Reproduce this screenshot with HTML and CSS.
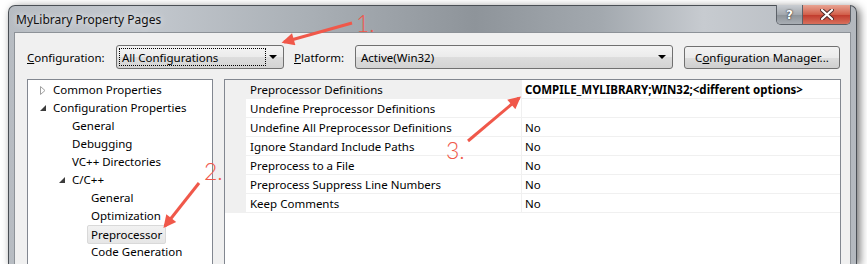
FILE: index.html
```html
<!DOCTYPE html>
<html lang="en">
<head>
    <meta charset="UTF-8">
    <title>MyLibrary Property Pages</title>
    <link rel="stylesheet" href="styles.css">
</head>
<body>
    <div class="window">
        <div class="titlebar">
            <span class="title">MyLibrary Property Pages</span>
            <div class="caption-buttons">
                <span class="cap-help">?</span>
                <span class="cap-close">
                    <svg width="14" height="11" viewBox="0 0 14 11"><path d="M2 1 L12 10 M12 1 L2 10" stroke="#4a2a2a" stroke-width="4" stroke-linecap="round"/><path d="M2 1 L12 10 M12 1 L2 10" stroke="#fff" stroke-width="2.2" stroke-linecap="round"/></svg>
                </span>
            </div>
        </div>
        <div class="client">
            <div class="toolbar">
                <label class="field-label config-label"><u>C</u>onfiguration:</label>
                <div class="combo config-combo">
                    <span class="focus-rect">All Configurations</span>
                    <span class="combo-arrow"></span>
                </div>
                <label class="field-label platform-label"><u>P</u>latform:</label>
                <div class="combo platform-combo">
                    <span class="combo-text">Active(Win32)</span>
                    <span class="combo-arrow"></span>
                </div>
                <button class="manager-button">C<u>o</u>nfiguration Manager...</button>
            </div>
            <div class="panes">
                <ul class="tree">
                    <li class="level0"><span class="expander"><svg width="6" height="9" viewBox="0 0 6 9"><path d="M0.5 0.5 L5 4.5 L0.5 8.5 Z" fill="#fff" stroke="#a0a0a0"/></svg></span>Common Properties</li>
                    <li class="level0"><span class="expander"><svg width="6" height="6" viewBox="0 0 6 6"><path d="M6 0 L6 6 L0 6 Z" fill="#3c3c3c"/></svg></span>Configuration Properties</li>
                    <li class="level1"><span class="expander"></span>General</li>
                    <li class="level1"><span class="expander"></span>Debugging</li>
                    <li class="level1"><span class="expander"></span>VC++ Directories</li>
                    <li class="level1"><span class="expander"><svg width="6" height="6" viewBox="0 0 6 6"><path d="M6 0 L6 6 L0 6 Z" fill="#3c3c3c"/></svg></span>C/C++</li>
                    <li class="level2"><span class="expander"></span>General</li>
                    <li class="level2"><span class="expander"></span>Optimization</li>
                    <li class="level2"><span class="expander"></span><span class="selected">Preprocessor</span></li>
                    <li class="level2"><span class="expander"></span>Code Generation</li>
                </ul>
                <div class="grid">
                    <table class="props">
                        <tr class="current">
                            <td class="gutter"></td>
                            <td class="name">Preprocessor Definitions</td>
                            <td class="value bold">COMPILE_MYLIBRARY;WIN32;&lt;different options&gt;</td>
                        </tr>
                        <tr>
                            <td class="gutter"></td>
                            <td class="name">Undefine Preprocessor Definitions</td>
                            <td class="value"></td>
                        </tr>
                        <tr>
                            <td class="gutter"></td>
                            <td class="name">Undefine All Preprocessor Definitions</td>
                            <td class="value">No</td>
                        </tr>
                        <tr>
                            <td class="gutter"></td>
                            <td class="name">Ignore Standard Include Paths</td>
                            <td class="value">No</td>
                        </tr>
                        <tr>
                            <td class="gutter"></td>
                            <td class="name">Preprocess to a File</td>
                            <td class="value">No</td>
                        </tr>
                        <tr>
                            <td class="gutter"></td>
                            <td class="name">Preprocess Suppress Line Numbers</td>
                            <td class="value">No</td>
                        </tr>
                        <tr>
                            <td class="gutter"></td>
                            <td class="name">Keep Comments</td>
                            <td class="value">No</td>
                        </tr>
                    </table>
                </div>
            </div>
        </div>
    </div>

    <!-- red callouts drawn on top of the screenshot -->
    <svg class="annotations" width="867" height="264" viewBox="0 0 867 264">
        <defs>
            <marker id="head" viewBox="0 0 10 10" refX="8" refY="5" markerWidth="5" markerHeight="4.2" orient="auto">
                <path d="M0 0 L10 5 L0 10 Z" fill="#f0584a"/>
            </marker>
        </defs>
        <line x1="352" y1="23" x2="284" y2="42" class="callout" marker-end="url(#head)"/>
        <line x1="199" y1="183" x2="165" y2="226" class="callout" marker-end="url(#head)"/>
        <line x1="468" y1="141" x2="519" y2="98" class="callout" marker-end="url(#head)"/>
        <text x="356" y="32" class="step">1.</text>
        <text x="204" y="180" class="step">2.</text>
        <text x="446" y="159" class="step">3.</text>
    </svg>
</body>
</html>
```

FILE: styles.css
```css
body {
    margin: 0;
    width: 867px;
    height: 264px;
    overflow: hidden;
    position: relative;
    background: #ffffff;
    font-family: "Noto Sans", "Open Sans", sans-serif;
    font-size: 11.5px;
    color: #000;
}

.window {
    margin: 5px 0 0 8px;
    width: 837px;
    padding: 0 5px 0 5px;
    border: 1px solid #4a4f55;
    border-bottom: none;
    border-radius: 7px 7px 0 0;
    background: linear-gradient(90deg, #b7bcc2 0%, #c4c9cf 15%, #aab0b6 35%, #8e949a 55%, #a3a9af 70%, #c7cbd0 82%, #b3b8be 100%);
    box-shadow: 3px 2px 8px rgba(0, 0, 0, 0.55);
}

.titlebar {
    height: 26px;
    display: flex;
    align-items: flex-start;
}

.title {
    padding: 5px 0 0 2px;
    font-size: 12px;
    color: #111;
    text-shadow: 0 0 6px rgba(255, 255, 255, 0.9);
}

.caption-buttons {
    margin-left: auto;
    margin-top: -1px;
    display: flex;
    height: 19px;
    border: 1px solid #5c6168;
    border-top: none;
    border-radius: 0 0 5px 5px;
    overflow: hidden;
}

.cap-help {
    width: 25px;
    display: flex;
    align-items: center;
    justify-content: center;
    font-family: "DejaVu Sans", sans-serif;
    font-weight: bold;
    font-size: 12px;
    color: #fff;
    text-shadow: 0 0 1px #333, 0 0 2px #333;
    background: linear-gradient(#c9cdd2, #a3a8ae 50%, #8c9298 51%, #a9aeb4);
    border-right: 1px solid #5c6168;
}

.cap-close {
    width: 47px;
    display: flex;
    align-items: center;
    justify-content: center;
    background: linear-gradient(#e8a493, #d2604b 50%, #c0392b 51%, #d8705c);
}

.client {
    height: 232px;
    box-sizing: border-box;
    background: #f0f0f0;
    border: 1px solid #8d9298;
    border-bottom: none;
    padding: 12px 9px 0 12px;
}

.toolbar {
    display: flex;
    align-items: center;
    height: 24px;
}

.field-label {
    flex: none;
}

.config-label {
    width: 89px;
}

.platform-label {
    width: 61px;
    margin-left: 10px;
}

.combo {
    flex: none;
    box-sizing: border-box;
    height: 24px;
    border: 1px solid #707070;
    border-radius: 3px;
    background: linear-gradient(#f4f4f4, #ebebeb 50%, #dddddd 51%, #d3d3d3);
    display: flex;
    align-items: center;
}

.config-combo {
    width: 168px;
}

.platform-combo {
    width: 318px;
}

.focus-rect {
    box-sizing: border-box;
    margin-left: 2px;
    width: 147px;
    height: 18px;
    padding-left: 2px;
    line-height: 17px;
    border: 1px dotted #000;
}

.combo-text {
    padding-left: 5px;
}

.combo-arrow {
    margin-left: auto;
    margin-right: 6px;
    width: 0;
    height: 0;
    border-left: 4px solid transparent;
    border-right: 4px solid transparent;
    border-top: 4px solid #000;
}

.manager-button {
    flex: none;
    margin-left: 11px;
    width: 156px;
    height: 23px;
    margin-top: 1px;
    border: 1px solid #707070;
    border-radius: 3px;
    background: linear-gradient(#f2f2f2, #ebebeb 50%, #dddddd 51%, #cfcfcf);
    font-family: inherit;
    font-size: inherit;
    color: #000;
    padding: 0;
}

.panes {
    display: flex;
    gap: 11px;
    margin-top: 10px;
    height: 186px;
}

.tree {
    list-style: none;
    margin: 0;
    padding: 1px 0 0 0;
    width: 184px;
    background: #fff;
    border: 1px solid #828790;
    border-bottom: none;
}

.tree li {
    height: 18px;
    line-height: 18px;
    display: flex;
    align-items: center;
    white-space: nowrap;
}

.tree .level0 {
    padding-left: 9px;
}

.tree .level1 {
    padding-left: 28px;
}

.tree .level2 {
    padding-left: 47px;
}

.expander {
    width: 16px;
    flex: none;
    display: flex;
    align-items: center;
    padding-left: 3px;
    box-sizing: border-box;
}

.selected {
    margin-left: -4px;
    padding: 0 3px;
    height: 17px;
    line-height: 17px;
    background: linear-gradient(#f2f2f2, #e6e6e6);
    border: 1px solid #d9d9d9;
    border-radius: 2px;
}

.grid {
    width: 615px;
    background: #fff;
    border: 1px solid #828790;
    border-bottom: none;
}

.props {
    border-collapse: collapse;
    width: 100%;
}

.props td {
    height: 18px;
    padding: 0;
    border-bottom: 1px solid #f0f0f0;
    white-space: nowrap;
}

.props .gutter {
    width: 21px;
    background: #f0f0f0;
}

.props .name {
    width: 271px;
    padding-left: 4px;
    border-right: 1px solid #f0f0f0;
}

.props .value {
    padding-left: 3px;
}

.props .current .name {
    background: #f0f0f0;
}

.bold {
    font-weight: bold;
}

.annotations {
    position: absolute;
    left: 0;
    top: 0;
    pointer-events: none;
}

.callout {
    stroke: #f0584a;
    stroke-width: 3;
}

.step {
    font-family: Lato, "Liberation Sans", sans-serif;
    font-weight: 300;
    font-size: 23px;
    fill: #f0584a;
}
```
